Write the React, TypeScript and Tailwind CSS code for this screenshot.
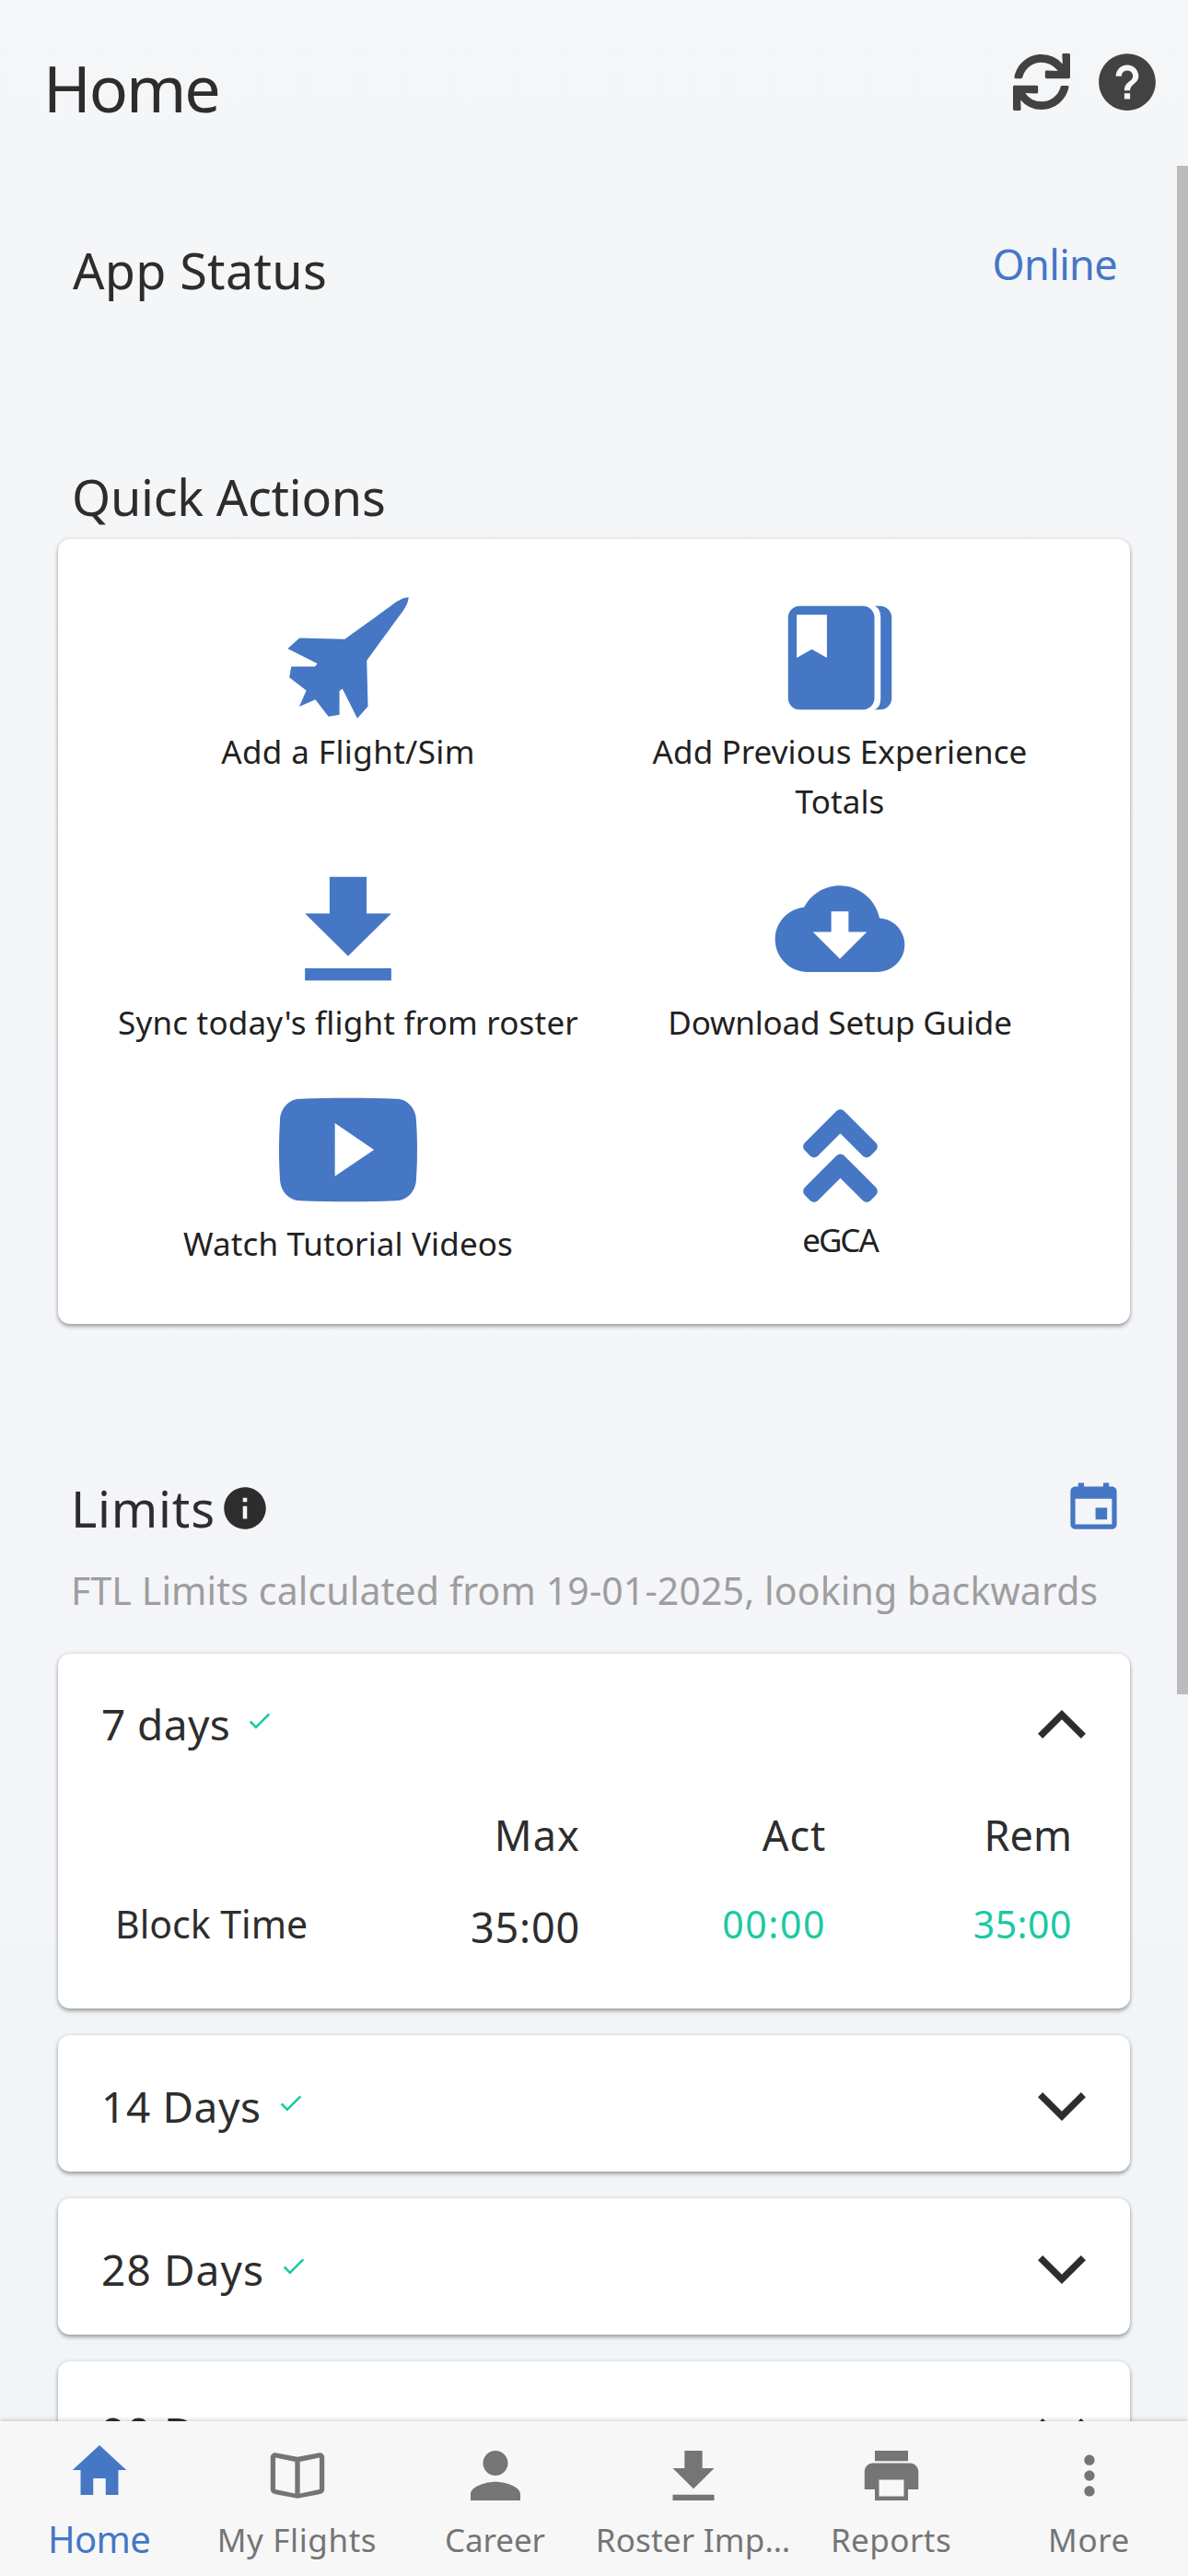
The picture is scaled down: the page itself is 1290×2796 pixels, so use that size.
import type { ReactNode } from "react";
import {
  IoLogoYoutube,
  IoMdBook,
  IoMdBookmarks,
  IoMdCalendar,
  IoMdCheckmark,
  IoMdCloudDownload,
  IoMdDownload,
  IoMdHelpCircle,
  IoMdHome,
  IoMdInformationCircle,
  IoMdJet,
  IoMdMore,
  IoMdPerson,
  IoMdPrint,
} from "react-icons/io";
import { FaAngleDoubleUp, FaSync } from "react-icons/fa";

const card =
  "rounded-[13px] bg-white shadow-[0_3px_4px_rgba(0,0,0,0.3),0_0_4px_rgba(0,0,0,0.14)]";

type Action = { label: string; icon: ReactNode; spacing: string };

const actions: Action[] = [
  { label: "Add a Flight/Sim", icon: <IoMdJet size={150} />, spacing: "tracking-[0.4px]" },
  { label: "Add Previous Experience Totals", icon: <IoMdBookmarks size={150} />, spacing: "tracking-[0.1px]" },
  { label: "Sync today's flight from roster", icon: <IoMdDownload size={150} />, spacing: "tracking-[0.2px]" },
  { label: "Download Setup Guide", icon: <IoMdCloudDownload size={150} />, spacing: "tracking-[-0.17px]" },
  { label: "Watch Tutorial Videos", icon: <IoLogoYoutube size={150} />, spacing: "tracking-[0.13px]" },
  { label: "eGCA", icon: <FaAngleDoubleUp size={129} className="mt-[17px]" />, spacing: "tracking-[-2px]" },
];

function Chevron({ up = false }: { up?: boolean }) {
  return (
    <svg width="52" height="31" viewBox="0 0 52 31" fill="none" stroke="#2d2d2d" strokeWidth="7.2">
      <path d={up ? "M2.6 28.4 26 5.1 49.4 28.4" : "M2.6 2.6 26 25.9 49.4 2.6"} />
    </svg>
  );
}

function LimitHeader({ title, spacing, open = false }: { title: string; spacing: string; open?: boolean }) {
  return (
    <div className="flex h-[60px] items-center justify-between pl-[47px] pr-[48px]">
      <div className="flex items-center gap-[17px]">
        <span className={`text-[46px] leading-[60px] ${spacing}`}>{title}</span>
        <IoMdCheckmark size={30} className="mb-[7px] text-[#1bc9a3]" />
      </div>
      <Chevron up={open} />
    </div>
  );
}

type Tab = { label: string; icon: ReactNode; spacing: string };

const tabs: Tab[] = [
  { label: "My Flights", icon: <IoMdBook size={72} />, spacing: "tracking-[0.6px]" },
  { label: "Career", icon: <IoMdPerson size={72} />, spacing: "tracking-[-0.1px]" },
  { label: "Roster Imp…", icon: <IoMdDownload size={72} />, spacing: "tracking-[0.2px]" },
  { label: "Reports", icon: <IoMdPrint size={72} />, spacing: "tracking-[0.45px]" },
  { label: "More", icon: <IoMdMore size={72} />, spacing: "tracking-[0.6px]" },
];

export default function App() {
  return (
    <div className="flex h-[2796px] w-[1290px] flex-col overflow-hidden bg-[linear-gradient(to_bottom,#f5f6f8_0,#f4f5f8_2108px,#f1f5f7_2108px)] font-['Noto_Sans',sans-serif] text-[#2d2d2d]">
      <header className="flex h-[180px] shrink-0 items-start justify-between pl-[47px] pr-[28px]">
        <h1 className="mt-[55px] text-[70px] leading-[80px] tracking-[-2.1px]">Home</h1>
        <div className="mt-[51px] flex items-center gap-6 text-[#424242]">
          <FaSync size={62} />
          <IoMdHelpCircle size={76} />
        </div>
      </header>

      <main className="flex min-h-0 flex-1 overflow-hidden">
        <div className="flex flex-1 flex-col pl-[63px] pr-[51px]">
          <section className="mt-[75px] flex shrink-0 items-start justify-between pl-4 pr-[14px]">
            <h2 className="mt-[6px] text-[54px] leading-[64px] tracking-[0.3px]">App Status</h2>
            <span className="text-[45px] leading-[64px] tracking-[-0.65px] text-[#4577c5]">Online</span>
          </section>

          <h2 className="mt-[182px] shrink-0 pl-[15px] text-[54px] leading-[64px] tracking-[-0.27px]">
            Quick Actions
          </h2>
          <section
            className={`${card} mt-[14px] grid h-[852px] w-[1164px] shrink-0 grid-cols-2 content-start gap-y-[36px] px-[48px] pt-[54px]`}
          >
            {actions.map((a) => (
              <div key={a.label} className="flex flex-col items-center px-3 text-center text-[#4577c5]">
                {a.icon}
                <span className={`max-w-[510px] text-[35px] leading-[54px] text-[#212121] ${a.spacing}`}>
                  {a.label}
                </span>
              </div>
            ))}
          </section>

          <section className="mt-[168px] flex h-[64px] shrink-0 items-center justify-between pl-[14px] pr-[6px]">
            <h2 className="flex items-center gap-[4px] text-[54px] leading-[64px] tracking-[0.8px]">
              Limits
              <IoMdInformationCircle size={56} />
            </h2>
            <IoMdCalendar size={67} className="mb-[5px] text-[#4577c5]" />
          </section>
          <p className="mt-[32px] shrink-0 whitespace-nowrap pl-[14px] text-[41px] leading-[50px] tracking-[0.14px] text-[#9e9e9e]">
            FTL Limits calculated from 19-01-2025, looking backwards
          </p>

          <div className="mt-[44px] flex w-[1164px] shrink-0 flex-col gap-[29px]">
            <section className={`${card} h-[385px] pt-[46px]`}>
              <LimitHeader title="7 days" spacing="tracking-[0.4px]" open />
              <div className="mt-[61px] grid grid-cols-[238px_267px_267px_267px] gap-y-[36px] pl-[62px] text-right text-[45px] leading-[60px]">
                <span />
                <span className="tracking-[1.1px]">Max</span>
                <span className="tracking-[0.85px]">Act</span>
                <span>Rem</span>
                <span className="whitespace-nowrap text-left text-[41px]">Block Time</span>
                <span className="pt-[4px] tracking-[0.8px]">35:00</span>
                <span className="text-[41px] tracking-[1.6px] text-[#1bc9a3]">00:00</span>
                <span className="text-[41px] tracking-[0.5px] text-[#1bc9a3]">35:00</span>
              </div>
            </section>
            <section className={`${card} h-[148px] pt-[47px]`}>
              <LimitHeader title="14 Days" spacing="tracking-[0.6px]" />
            </section>
            <section className={`${card} h-[148px] pt-[47px]`}>
              <LimitHeader title="28 Days" spacing="tracking-[1.1px]" />
            </section>
            <section className={`${card} h-[148px] pt-[47px]`}>
              <LimitHeader title="90 Days" spacing="tracking-[1.1px]" />
            </section>
          </div>
        </div>
        <div className="h-[1659px] w-[12px] bg-[#bbbbbb]" />
      </main>

      <nav className="relative z-10 grid h-[168px] shrink-0 grid-cols-6 bg-[#f7f7f7] text-[#757575] shadow-[0_-2px_4px_rgba(0,0,0,0.14)]">
        <div className="flex flex-col items-center pt-[17px] text-[#4577c5]">
          <IoMdHome size={72} />
          <span className="mt-[14px] text-[40px] leading-[50px] tracking-[-0.7px]">Home</span>
        </div>
        {tabs.map((t) => (
          <div key={t.label} className="flex flex-col items-center pt-[23px]">
            {t.icon}
            <span className={`mt-[9px] whitespace-nowrap text-[35px] leading-[50px] ${t.spacing}`}>{t.label}</span>
          </div>
        ))}
      </nav>
    </div>
  );
}
